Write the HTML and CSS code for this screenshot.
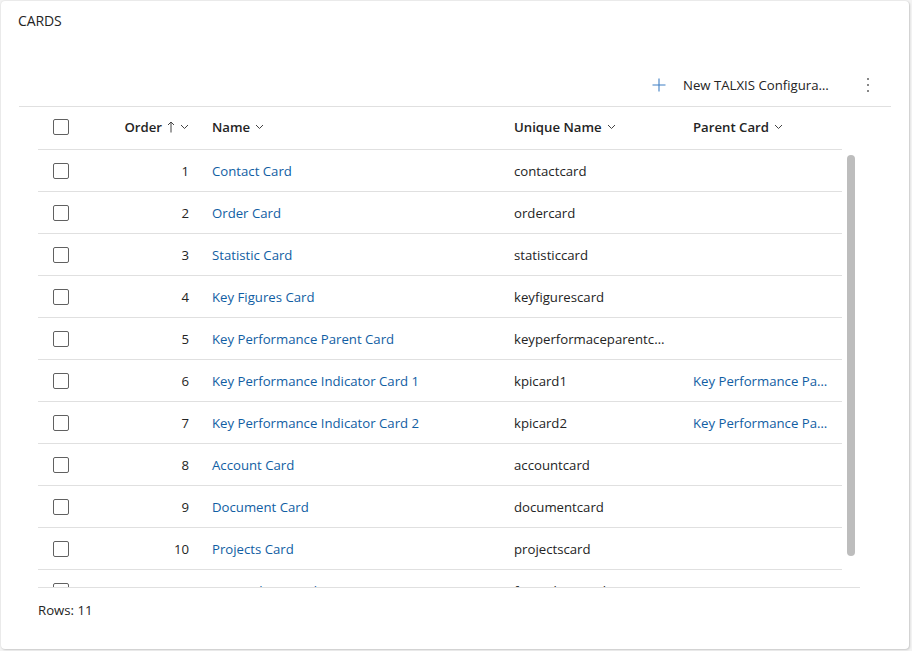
FILE: index.html
```html
<!DOCTYPE html>
<html lang="en">
<head>
<meta charset="utf-8">
<title>Cards</title>
<link rel="stylesheet" href="styles.css">
</head>
<body>
<div class="card">
  <h2 class="title">CARDS</h2>
  <div class="cmdbar">
    <button class="cmd">
      <svg class="plus" width="16" height="16" viewBox="0 0 16 16"><path d="M8 1.5v13M1.5 8h13" stroke="#3f7fc4" stroke-width="1.1" fill="none"/></svg>
      <span class="cmd-label">New TALXIS Configuration Card</span>
    </button>
    <button class="more">
      <svg width="4" height="16" viewBox="0 0 4 16"><circle cx="2" cy="2" r="1" fill="#616161"/><circle cx="2" cy="8" r="1" fill="#616161"/><circle cx="2" cy="14" r="1" fill="#616161"/></svg>
    </button>
  </div>
  <div class="grid">
    <div class="row head">
      <div class="c chk"><span class="box"></span></div>
      <div class="c ord">Order
        <svg class="up" width="8" height="12" viewBox="0 0 8 12"><path d="M4 11.5V1M1 4l3-3 3 3" stroke="#424242" stroke-width="1" fill="none"/></svg>
        <svg class="chev" width="9" height="6" viewBox="0 0 9 6"><path d="M1 1l3.5 3.5L8 1" stroke="#424242" stroke-width="1" fill="none"/></svg>
      </div>
      <div class="c">Name <svg class="chev" width="9" height="6" viewBox="0 0 9 6"><path d="M1 1l3.5 3.5L8 1" stroke="#424242" stroke-width="1" fill="none"/></svg></div>
      <div class="c">Unique Name <svg class="chev" width="9" height="6" viewBox="0 0 9 6"><path d="M1 1l3.5 3.5L8 1" stroke="#424242" stroke-width="1" fill="none"/></svg></div>
      <div class="c">Parent Card <svg class="chev" width="9" height="6" viewBox="0 0 9 6"><path d="M1 1l3.5 3.5L8 1" stroke="#424242" stroke-width="1" fill="none"/></svg></div>
    </div>
    <div class="body">
      <div class="row"><div class="c chk"><span class="box"></span></div><div class="c ord">1</div><div class="c link">Contact Card</div><div class="c">contactcard</div><div class="c link"></div></div>
      <div class="row"><div class="c chk"><span class="box"></span></div><div class="c ord">2</div><div class="c link">Order Card</div><div class="c">ordercard</div><div class="c link"></div></div>
      <div class="row"><div class="c chk"><span class="box"></span></div><div class="c ord">3</div><div class="c link">Statistic Card</div><div class="c">statisticcard</div><div class="c link"></div></div>
      <div class="row"><div class="c chk"><span class="box"></span></div><div class="c ord">4</div><div class="c link">Key Figures Card</div><div class="c">keyfigurescard</div><div class="c link"></div></div>
      <div class="row"><div class="c chk"><span class="box"></span></div><div class="c ord">5</div><div class="c link">Key Performance Parent Card</div><div class="c">keyperformaceparentcard</div><div class="c link"></div></div>
      <div class="row"><div class="c chk"><span class="box"></span></div><div class="c ord">6</div><div class="c link">Key Performance Indicator Card 1</div><div class="c">kpicard1</div><div class="c link">Key Performance Parent Card</div></div>
      <div class="row"><div class="c chk"><span class="box"></span></div><div class="c ord">7</div><div class="c link">Key Performance Indicator Card 2</div><div class="c">kpicard2</div><div class="c link">Key Performance Parent Card</div></div>
      <div class="row"><div class="c chk"><span class="box"></span></div><div class="c ord">8</div><div class="c link">Account Card</div><div class="c">accountcard</div><div class="c link"></div></div>
      <div class="row"><div class="c chk"><span class="box"></span></div><div class="c ord">9</div><div class="c link">Document Card</div><div class="c">documentcard</div><div class="c link"></div></div>
      <div class="row"><div class="c chk"><span class="box"></span></div><div class="c ord">10</div><div class="c link">Projects Card</div><div class="c">projectscard</div><div class="c link"></div></div>
      <div class="row"><div class="c chk"><span class="box"></span></div><div class="c ord">11</div><div class="c link">Focus Chart Card</div><div class="c">focuschartcard</div><div class="c link"></div></div>
      <div class="thumb"></div>
    </div>
    <div class="footer">Rows: 11</div>
  </div>
</div>
</body>
</html>
```
FILE: styles.css
```css
* { box-sizing: border-box; }
html, body { margin: 0; padding: 0; }
body {
  background: #f3f3f3;
  font-family: "Open Sans", "Noto Sans", sans-serif;
  color: #242424;
  padding: 1px 3px 2px 1px;
}
.card {
  width: 908px;
  height: 648px;
  background: #fff;
  border-radius: 4px;
  box-shadow: 0 0 2px rgba(0,0,0,0.12), 1px 1px 2px rgba(0,0,0,0.14);
  display: flex;
  flex-direction: column;
  overflow: hidden;
}
.title {
  margin: 0;
  padding: 10px 17px 0;
  height: 30px;
  font-size: 14px;
  line-height: 20px;
  font-weight: 500;
  letter-spacing: -0.1px;
}
.cmdbar {
  margin: 33px 18px 0;
  height: 43px;
  border-bottom: 1px solid #e0e0e0;
  display: flex;
  justify-content: flex-end;
  align-items: center;
}
.cmd {
  display: flex;
  align-items: center;
  gap: 16px;
  background: none;
  border: 0;
  padding: 0 15px 0 0;
  height: 42px;
  font: inherit;
  font-size: 13.2px;
  color: #242424;
}
.cmd-label {
  display: block;
  width: 148px;
  white-space: nowrap;
  overflow: hidden;
  text-overflow: ellipsis;
}
.more {
  width: 44px;
  height: 42px;
  background: none;
  border: 0;
  padding: 0;
  display: flex;
  align-items: center;
  justify-content: center;
  margin-right: 1px;
}
.grid {
  margin-left: 37px;
  width: 822px;
  display: flex;
  flex-direction: column;
}
.row {
  display: grid;
  grid-template-columns: 44px 118px 302px 179px 161px;
  width: 804px;
  height: 42px;
  border-bottom: 1px solid #e0e0e0;
  font-size: 13.2px;
  align-items: center;
}
.row.head {
  height: 43px;
  font-weight: 600;
  padding-bottom: 2px;
}
.c {
  padding: 0 12px;
  white-space: nowrap;
  overflow: hidden;
  text-overflow: ellipsis;
  display: flex;
  align-items: center;
}
.c.chk { padding: 0 0 0 15px; }
.c.ord { justify-content: flex-end; padding-right: 11px; }
.head .c { gap: 5px; }
.head .c.ord { gap: 5px; }
.link {
  color: #115ea3;
}
.row:not(.head) .c:not(.chk):not(.ord) { display: block; }
.box {
  display: block;
  width: 16px;
  height: 16px;
  border: 1px solid #616161;
  border-radius: 2px;
}
.body {
  position: relative;
  height: 437px;
  overflow: hidden;
}
.thumb {
  position: absolute;
  left: 809px;
  top: 5px;
  width: 8px;
  height: 401px;
  background: #bdbdbd;
  border-radius: 4px;
}
.footer {
  border-top: 1px solid #e0e0e0;
  height: 62px;
  padding-top: 12px;
  font-size: 13.2px;
  line-height: 20px;
}
```
